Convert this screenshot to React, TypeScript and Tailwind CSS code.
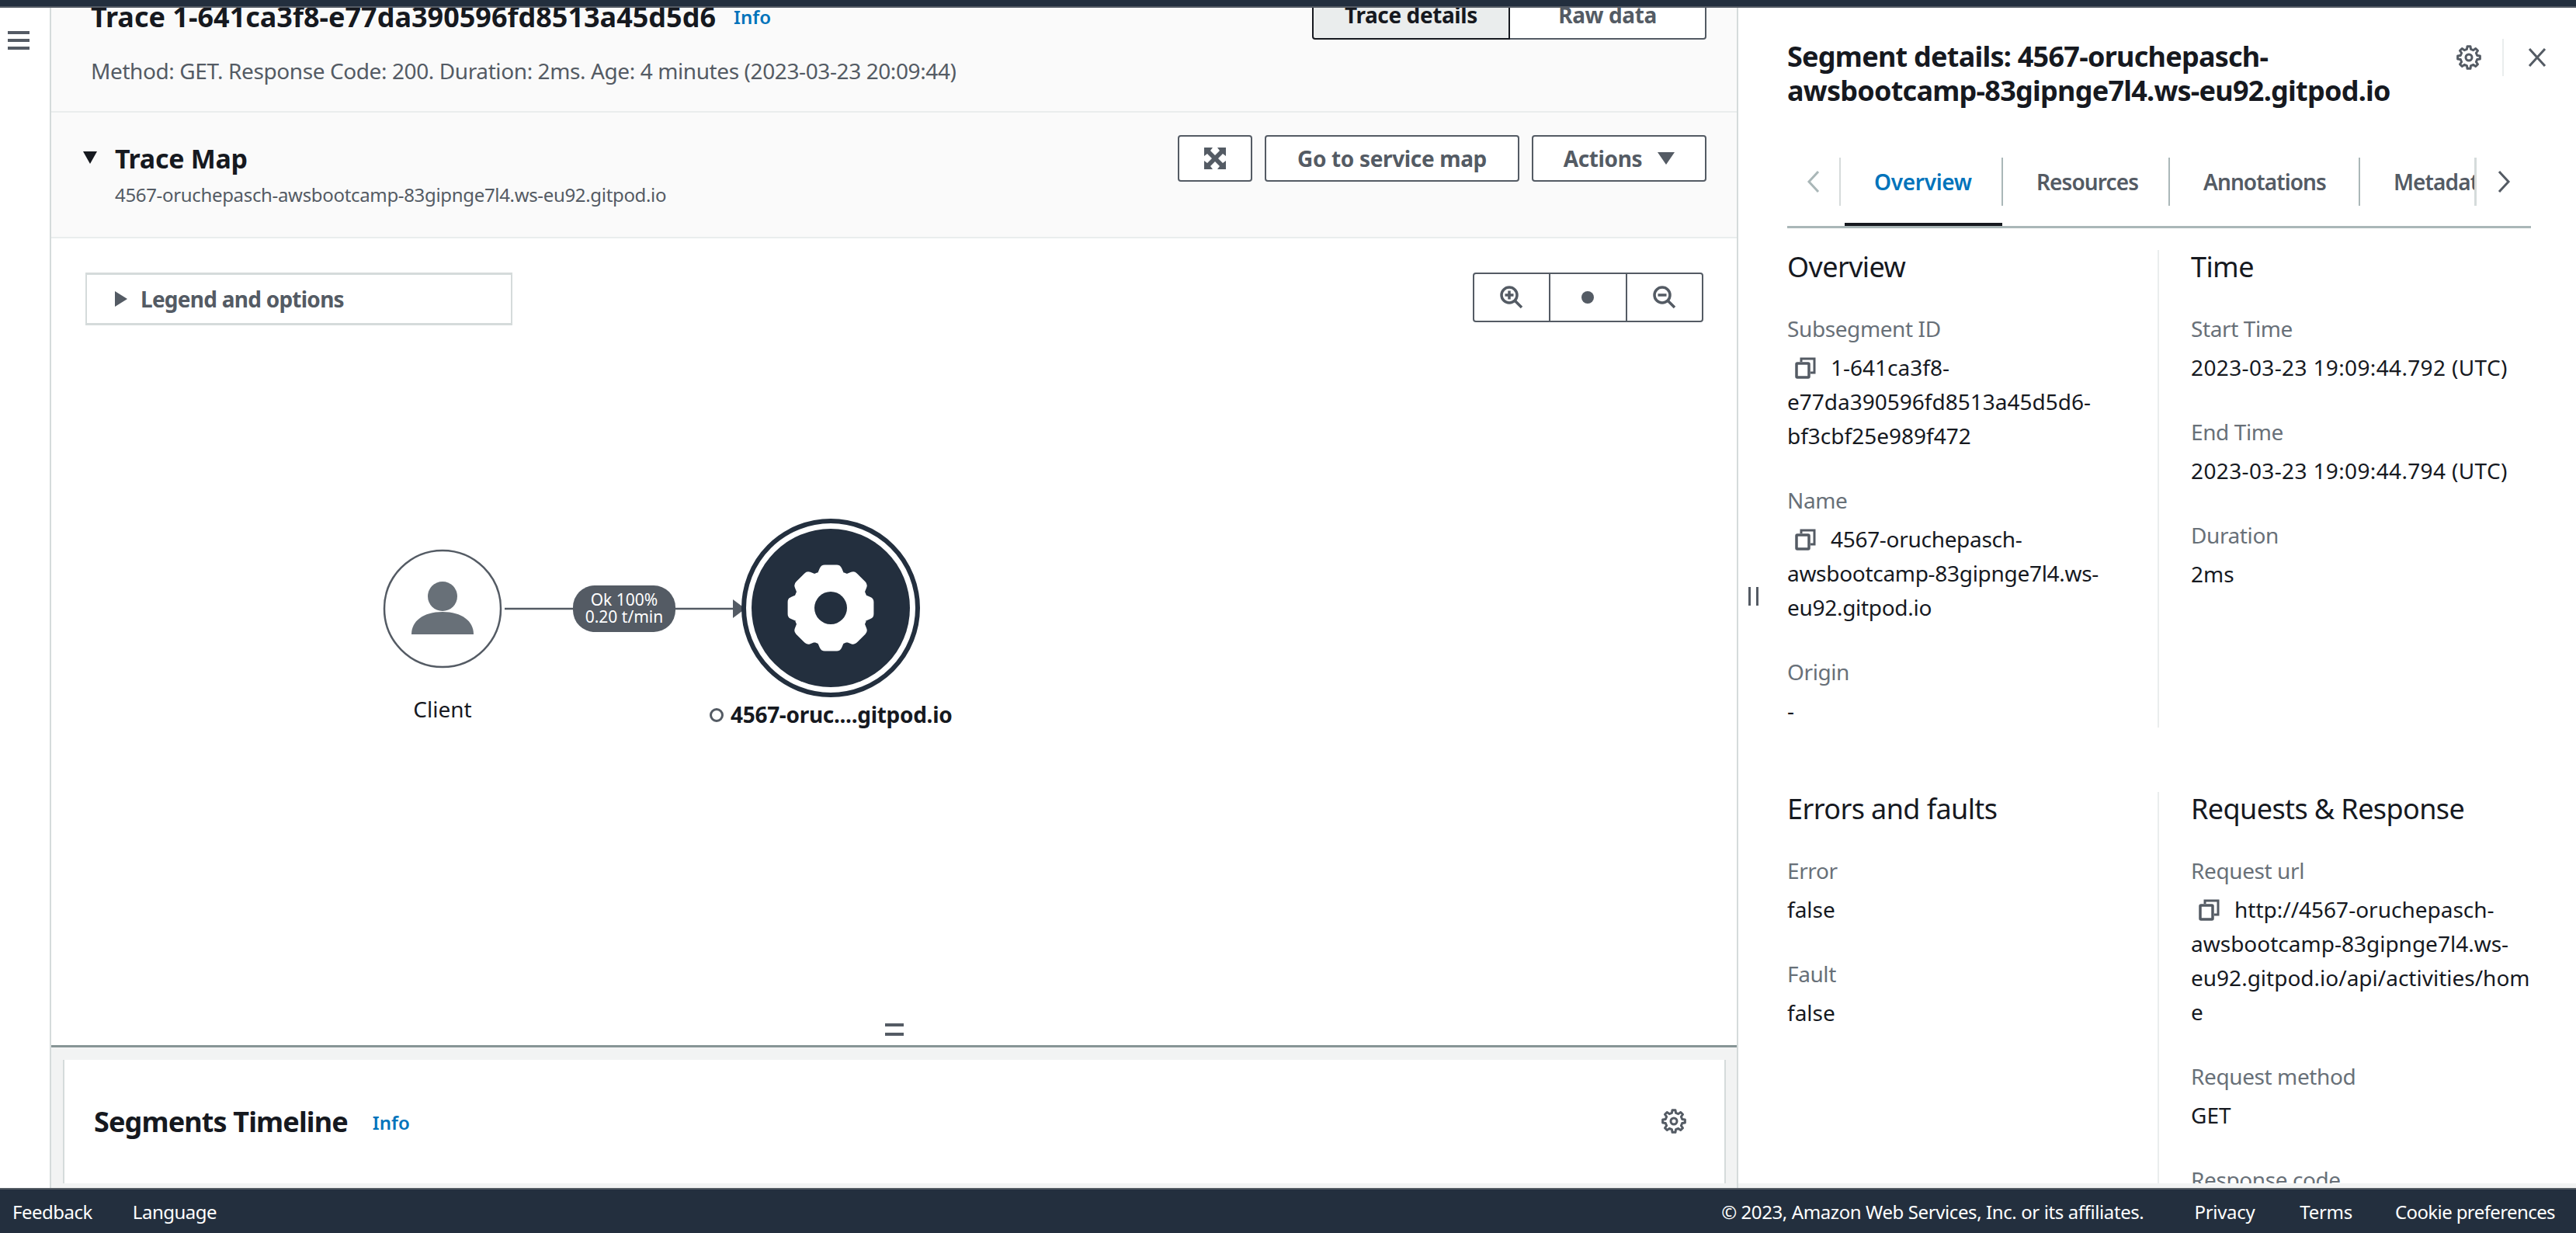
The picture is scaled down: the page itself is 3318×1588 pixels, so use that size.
import type { ReactNode } from 'react';

const gearPath = (cx: number, cy: number, ro: number, ri: number, teeth: number, top = 0.17, base = 0.3) => {
    const step = (Math.PI * 2) / teeth;
    let d = '';
    for (let i = 0; i < teeth; i++) {
        const a = i * step - Math.PI / 2;
        const pts: [number, number][] = [
            [ri, a - step * base],
            [ro, a - step * top],
            [ro, a + step * top],
            [ri, a + step * base],
        ];
        pts.forEach(([r, t], j) => {
            const x = (cx + r * Math.cos(t)).toFixed(2);
            const y = (cy + r * Math.sin(t)).toFixed(2);
            d += `${i === 0 && j === 0 ? 'M' : 'L'}${x} ${y} `;
        });
    }
    return d + 'Z';
};

function GearIcon({ className }: { className: string }) {
    return (
        <svg viewBox="0 0 32 32" className={className} fill="none" stroke="#545b64">
            <path d={gearPath(16, 16, 14.5, 11, 8)} strokeWidth="3" strokeLinejoin="round" />
            <circle cx="16" cy="16" r="4" strokeWidth="3" />
        </svg>
    );
}

function CopyIcon() {
    return (
        <svg viewBox="0 0 27 28" className="inline-block w-[27px] h-[28px] ml-[10px] mr-[19px] align-[-4px]" fill="none" stroke="#545b64" strokeWidth="3.5">
            <rect x="2" y="8" width="16" height="18" rx="1" />
            <path d="M8 6V2H25V20H20" strokeWidth="3" />
        </svg>
    );
}

function Field({ label, children, valueClass = '' }: { label: string; children?: ReactNode; valueClass?: string }) {
    return (
        <div className="mb-[39px]">
            <div className="text-[#687078] tracking-[-0.4px]">{label}</div>
            <div className={`mt-[6px] text-[#16191f] w-[442px] wrap-break-word ${valueClass}`}>{children}</div>
        </div>
    );
}

function Heading({ children }: { children: ReactNode }) {
    return <h3 className="text-[36px] leading-[44px] tracking-[-0.6px] text-[#16191f] mb-[35px]">{children}</h3>;
}

function Tab({ label, width, active }: { label: string; width: string; active?: boolean }) {
    return (
        <div className={`shrink-0 h-[62px] flex items-center pl-[43px] border-r-2 border-[#aab7b8] font-semibold ${width} ${active ? 'text-[#0073bb] tracking-[-0.3px]' : 'text-[#545b64] tracking-[-0.9px]'}`}>
            {label}
        </div>
    );
}

function MapButton({ className, children }: { className: string; children: ReactNode }) {
    return (
        <div className={`h-[60px] flex items-center justify-center border-2 border-[#545b64] rounded-[4px] bg-white font-bold text-[#545b64] tracking-[-0.35px] ${className}`}>
            {children}
        </div>
    );
}

function TraceGraph() {
    return (
        <svg viewBox="66 307 2171 1041" className="absolute left-0 top-0 w-[2171px] h-[1041px] pointer-events-none">
            <circle cx="570" cy="784" r="75" fill="#fff" stroke="#545b64" strokeWidth="2.5" />
            <ellipse cx="570" cy="768" rx="19" ry="19" fill="#687078" />
            <path d="M530 817C530 800 545 788 570 788C595 788 610 800 610 817Z" fill="#687078" />
            <path d="M650 784H948" stroke="#545b64" strokeWidth="2.5" />
            <path d="M944 772L960 784L944 796Z" fill="#545b64" />
            <rect x="738" y="754" width="132" height="60" rx="28" fill="#545b64" />
            <text x="804" y="780" textAnchor="middle" fontSize="21" fill="#fff">Ok 100%</text>
            <text x="804" y="802" textAnchor="middle" fontSize="21" fill="#fff">0.20 t/min</text>
            <circle cx="1070" cy="783" r="112" fill="#fff" stroke="#232f3e" strokeWidth="6" />
            <circle cx="1070" cy="783" r="102" fill="#232f3e" />
            <path d={gearPath(1070, 783, 49, 42, 8, 0.2, 0.34)} fill="#fff" stroke="#fff" strokeWidth="14" strokeLinejoin="round" />
            <circle cx="1070" cy="783" r="21" fill="#232f3e" />
            <text x="570" y="924" textAnchor="middle" fontSize="28" fill="#16191f">Client</text>
            <circle cx="923" cy="921" r="7.5" fill="#fff" stroke="#545b64" strokeWidth="3" />
            <text x="941" y="931" fontSize="28" fontWeight="700" letterSpacing="-0.3" fill="#16191f">4567-oruc....gitpod.io</text>
        </svg>
    );
}

function App() {
    return (
        <div className="h-[1588px] w-[3318px] flex flex-col overflow-hidden bg-white font-['Noto_Sans',sans-serif] text-[28px] leading-[44px]">
            <div className="h-[10px] shrink-0 bg-[#232f3e] border-b-2 border-[#545b64]"></div>

            <div className="flex-1 min-h-0 flex">
                <div className="w-[64px] shrink-0 pl-[10px] pt-[30px]">
                    <div className="w-[28px] flex flex-col gap-[6px]">
                        <div className="h-[4px] bg-[#545b64]"></div>
                        <div className="h-[4px] bg-[#545b64]"></div>
                        <div className="h-[4px] bg-[#545b64]"></div>
                    </div>
                </div>

                {/* main column */}
                <div className="w-[2173px] shrink-0 border-l-2 border-[#d5dbdb] flex flex-col min-h-0">
                    <div className="h-[135px] shrink-0 bg-[#fafafa] border-b-2 border-[#eaeded] overflow-hidden pl-[51px] pr-[39px]">
                        <div className="-mt-[23px] h-[64px] flex justify-between items-start">
                            <div className="mt-[13px] flex items-center">
                                <h1 className="text-[36px] leading-[44px] font-bold text-[#16191f]">Trace 1-641ca3f8-e77da390596fd8513a45d5d6</h1>
                                <span className="ml-[23px] text-[24px] font-semibold text-[#0073bb]">Info</span>
                            </div>
                            <div className="flex h-[64px] font-bold tracking-[-0.4px]">
                                <div className="w-[255px] flex items-center justify-center bg-[#eaeded] text-[#16191f] border-2 border-[#16191f] rounded-l-[4px]">Trace details</div>
                                <div className="w-[253px] flex items-center justify-center bg-white text-[#545b64] border-2 border-l-0 border-[#545b64] rounded-r-[4px]">Raw data</div>
                            </div>
                        </div>
                        <p className="mt-[18px] text-[#545b64] tracking-[-0.4px]">Method: GET. Response Code: 200. Duration: 2ms. Age: 4 minutes (2023-03-23 20:09:44)</p>
                    </div>

                    <div className="h-[162px] shrink-0 bg-[#fafafa] border-b-2 border-[#eaeded] pl-[41px] pr-[39px] pt-[29px] flex justify-between">
                        <div>
                            <div className="flex items-center mt-[8px]">
                                <svg viewBox="0 0 18 16" className="w-[18px] h-[16px] mr-[23px] -mt-[2px]"><path d="M0 0H18L9 16Z" fill="#16191f" /></svg>
                                <h2 className="text-[34px] leading-[44px] font-bold tracking-[-0.3px] text-[#16191f]">Trace Map</h2>
                            </div>
                            <p className="ml-[41px] mt-[7px] text-[24px] leading-[36px] tracking-[-0.33px] text-[#545b64]">4567-oruchepasch-awsbootcamp-83gipnge7l4.ws-eu92.gitpod.io</p>
                        </div>
                        <div className="flex gap-[16px]">
                            <MapButton className="w-[96px]">
                                <svg viewBox="0 0 28 28" className="w-[28px] h-[28px]">
                                    <path d="M0 0H11L8 4L14 10L20 4L17 0H28V11L24 8L18 14L24 20L28 17V28H17L20 24L14 18L8 24L11 28H0V17L4 20L10 14L4 8L0 11Z" fill="#545b64" />
                                </svg>
                            </MapButton>
                            <MapButton className="w-[328px]">Go to service map</MapButton>
                            <MapButton className="w-[225px] gap-[20px]">
                                Actions
                                <svg viewBox="0 0 22 16" className="w-[22px] h-[16px]"><path d="M0 0H22L11 16Z" fill="#545b64" /></svg>
                            </MapButton>
                        </div>
                    </div>

                    <div className="h-[1042px] shrink-0 relative border-b-[3px] border-[#879596]">
                        <TraceGraph />
                        <div className="relative flex justify-between pl-[44px] pr-[43px] pt-[44px]">
                            <div className="w-[550px] h-[68px] border-2 border-y-[3px] border-[#d5dbdb] bg-white flex items-center pl-[36px] gap-[17px] font-bold tracking-[-0.75px] text-[#545b64]">
                                <svg viewBox="0 0 16 20" className="w-[16px] h-[20px]"><path d="M0 0L16 10L0 20Z" fill="#545b64" /></svg>
                                Legend and options
                            </div>
                            <div className="w-[297px] h-[64px] flex border-2 border-[#545b64] rounded-[4px] bg-white divide-x-2 divide-[#545b64]">
                                <div className="flex-1 flex items-center justify-center">
                                    <svg viewBox="0 0 30 30" className="w-[30px] h-[30px]" fill="none" stroke="#545b64" strokeWidth="3.5">
                                        <circle cx="12" cy="12" r="10" />
                                        <path d="M19 19L28 28M6.5 12H17.5M12 6.5V17.5" />
                                    </svg>
                                </div>
                                <div className="flex-1 flex items-center justify-center">
                                    <div className="w-[16px] h-[16px] rounded-full bg-[#545b64]"></div>
                                </div>
                                <div className="flex-1 flex items-center justify-center">
                                    <svg viewBox="0 0 30 30" className="w-[30px] h-[30px]" fill="none" stroke="#545b64" strokeWidth="3.5">
                                        <circle cx="12" cy="12" r="10" />
                                        <path d="M19 19L28 28M6.5 12H17.5" />
                                    </svg>
                                </div>
                            </div>
                        </div>
                        <div className="absolute left-[1074px] top-[1011px] w-[24px] flex flex-col gap-[8px]">
                            <div className="h-[4px] bg-[#545b64]"></div>
                            <div className="h-[4px] bg-[#545b64]"></div>
                        </div>
                    </div>

                    <div className="flex-1 min-h-0 bg-[#f2f3f3] pl-[15px] pr-[14px] pt-[16px] pb-[6px]">
                        <div className="h-full bg-white border-x-2 border-[#d5dbdb] pl-[38px] pr-[49px] flex items-center justify-between">
                            <div className="flex items-center">
                                <h2 className="text-[36px] leading-[44px] font-bold tracking-[-0.87px] text-[#16191f]">Segments Timeline</h2>
                                <span className="ml-[32px] mt-[3px] text-[24px] font-semibold text-[#0073bb]">Info</span>
                            </div>
                            <GearIcon className="w-[32px] h-[32px] -mt-[2px]" />
                        </div>
                    </div>
                </div>

                {/* segment details panel */}
                <div className="flex-1 min-w-0 relative border-l-2 border-[#d5dbdb] flex flex-col">
                    <div className="absolute left-[13px] top-[746px] flex gap-[7px]">
                        <div className="w-[3px] h-[24px] bg-[#545b64]"></div>
                        <div className="w-[3px] h-[24px] bg-[#545b64]"></div>
                    </div>
                    <div className="flex-1 min-h-0 overflow-hidden pl-[63px] pr-[58px] pt-[41px]">
                        <div className="flex justify-between">
                            <h2 className="w-[800px] text-[36px] leading-[44px] font-bold tracking-[-0.75px] text-[#16191f]">Segment details: 4567-oruchepasch-awsbootcamp-83gipnge7l4.ws-eu92.gitpod.io</h2>
                            <div className="flex items-start h-[48px] -mr-[20px]">
                                <GearIcon className="w-[32px] h-[32px] mt-[7px] mr-[27px]" />
                                <div className="w-[2px] h-[48px] -mt-px bg-[#eaeded]"></div>
                                <svg viewBox="0 0 24 24" className="w-[24px] h-[24px] mt-[11px] ml-[31px]" fill="none" stroke="#545b64" strokeWidth="3"><path d="M2 1L22 23M22 1L2 23" /></svg>
                            </div>
                        </div>

                        <div className="mt-[64px] h-[91px] flex items-start border-b-[3px] border-[#aab7b8] relative">
                            <div className="w-[69px] h-[62px] flex items-center justify-center border-r-2 border-[#d5dbdb]">
                                <svg viewBox="0 0 18 30" className="w-[18px] h-[30px]" fill="none" stroke="#aab7b8" strokeWidth="3"><path d="M15 2L3 15L15 28" /></svg>
                            </div>
                            <div className="w-[819px] overflow-hidden flex border-r-[3px] border-[#d5dbdb]">
                                <Tab label="Overview" width="w-[209px]" active />
                                <Tab label="Resources" width="w-[215px]" />
                                <Tab label="Annotations" width="w-[245px]" />
                                <Tab label="Metadata" width="w-[200px]" />
                            </div>
                            <div className="w-[70px] h-[62px] flex items-center justify-center">
                                <svg viewBox="0 0 18 30" className="w-[18px] h-[30px]" fill="none" stroke="#545b64" strokeWidth="3"><path d="M3 2L15 15L3 28" /></svg>
                            </div>
                            <div className="absolute left-[74px] bottom-0 w-[203px] h-[4px] bg-[#16191f]"></div>
                        </div>

                        <div className="mt-[28px] grid grid-cols-[479px_1fr]">
                            <div className="border-r-2 border-[#eaeded]">
                                <Heading>Overview</Heading>
                                <Field label="Subsegment ID"><CopyIcon />1-641ca3f8-e77da390596fd8513a45d5d6-bf3cbf25e989f472</Field>
                                <Field label="Name" valueClass="tracking-[-0.3px]"><CopyIcon />4567-oruchepasch-awsbootcamp-83gipnge7l4.ws-eu92.gitpod.io</Field>
                                <div className="-mb-[39px]"><Field label="Origin">-</Field></div>
                            </div>
                            <div className="pl-[41px]">
                                <Heading>Time</Heading>
                                <Field label="Start Time" valueClass="tracking-[0.36px]">2023-03-23 19:09:44.792 (UTC)</Field>
                                <Field label="End Time" valueClass="tracking-[0.36px]">2023-03-23 19:09:44.794 (UTC)</Field>
                                <Field label="Duration">2ms</Field>
                            </div>
                        </div>

                        <div className="mt-[83px] grid grid-cols-[479px_1fr]">
                            <div className="border-r-2 border-[#eaeded]">
                                <Heading>Errors and faults</Heading>
                                <Field label="Error">false</Field>
                                <Field label="Fault">false</Field>
                            </div>
                            <div className="pl-[41px]">
                                <Heading>Requests &amp; Response</Heading>
                                <Field label="Request url"><CopyIcon />http://4567-oruchepasch-awsbootcamp-83gipnge7l4.ws-eu92.gitpod.io/api/activities/home</Field>
                                <Field label="Request method">GET</Field>
                                <Field label="Response code" />
                            </div>
                        </div>
                    </div>
                    <div className="h-[6px] shrink-0 bg-[#f2f3f3]"></div>
                </div>
            </div>

            <div className="h-[58px] shrink-0 bg-[#232f3e] border-t-2 border-[#545b64] flex items-center justify-between pl-[16px] pr-[27px] pt-[2px] text-[24px] text-white tracking-[-0.3px]">
                <div className="flex gap-[52px] tracking-[-0.5px]">
                    <span>Feedback</span>
                    <span>Language</span>
                </div>
                <div className="flex">
                    <span className="tracking-[-0.4px]">© 2023, Amazon Web Services, Inc. or its affiliates.</span>
                    <span className="ml-[65px]">Privacy</span>
                    <span className="ml-[58px]">Terms</span>
                    <span className="ml-[55px] tracking-[-0.6px]">Cookie preferences</span>
                </div>
            </div>
        </div>
    );
}

export default App;
